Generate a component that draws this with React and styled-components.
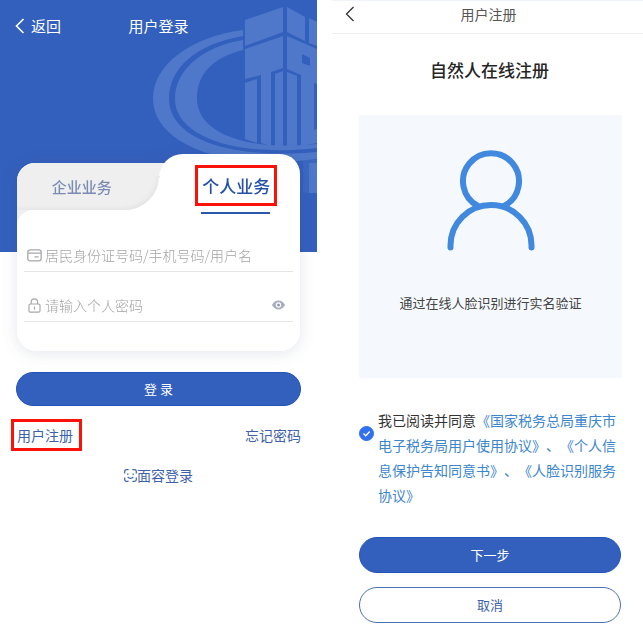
import React from "react";
import styled, { createGlobalStyle, css } from "styled-components";

const blue = "#3460bd";
const ink = "#3d62a8";
const red = "#fb1208";

const GlobalStyle = createGlobalStyle`
  *, *::before, *::after { box-sizing: border-box; }
  body {
    margin: 0;
    background: #fff;
    font-family: "Noto Sans CJK SC", "Noto Sans", sans-serif;
    font-size: 14px;
    line-height: 20px;
    text-spacing-trim: space-all;
  }
  button, input { font: inherit; }
  button { border: 0; background: none; padding: 0; cursor: pointer; }
  a { text-decoration: none; color: inherit; }
  svg { display: block; flex: none; }
`;

const Page = styled.main`
  display: grid;
  grid-template-columns: 317fr 311fr;
  column-gap: 15px;
  align-items: start;
`;

const Screen = styled.section`
  min-width: 0;
`;

const Hero = styled.div`
  position: relative;
  height: 252px;
  background: ${blue};
  overflow: hidden;
`;

const Watermark = styled.svg`
  position: absolute;
  top: 0;
  right: 0;
  fill: #4f78ca;
`;

const HeroBar = styled.header`
  position: relative;
  display: grid;
  grid-template-columns: 1fr auto 1fr;
  align-items: center;
  height: 52px;
  padding: 0 15px;
  color: #fff;
`;

const BackButton = styled.button`
  display: flex;
  align-items: center;
  gap: 6px;
  color: ${(p) => p.$color};
  font-size: 15px;
`;

const ScreenTitle = styled.h1`
  margin: 0;
  font-size: ${(p) => p.$size};
  font-weight: 400;
`;

const LoginBody = styled.form`
  position: relative;
  margin-top: -98px;
  padding: 0 16px;
`;

const Card = styled.div`
  margin: 0 1px;
  filter: drop-shadow(0 2px 8px rgba(30, 50, 90, 0.12));
`;

const Tabs = styled.div`
  display: grid;
  grid-template-columns: 1fr 1fr;
  align-items: end;
`;

const InactiveCell = styled.div`
  position: relative;
  height: 47px;
  background: #fff;
  border-radius: 18px 0 0 0;

  &::after {
    content: "";
    position: absolute;
    top: 0;
    right: -12px;
    width: 24px;
    height: 13px;
    background: #efefef;
  }
`;

const InactiveTab = styled.button`
  width: 100%;
  height: 47px;
  padding-right: 12px;
  background: #efefef;
  border-radius: 18px 0 34px 0;
  box-shadow: inset -3px -4px 6px -4px rgba(0, 0, 0, 0.07);
  color: #7b8cb4;
  font-size: 15px;
  font-weight: 500;
`;

const ActiveTab = styled.button`
  position: relative;
  z-index: 1;
  display: flex;
  justify-content: center;
  height: 56px;
  padding: 11px 0 0 14px;
  background: #fff;
  border-radius: 24px 20px 0 0;
  color: #2450a8;
  font-size: 17px;
  font-weight: 500;
`;

const TabLabel = styled.span`
  position: relative;
  height: 41px;
  padding: 8px 4px;
  border: 3px solid ${red};

  &::after {
    content: "";
    position: absolute;
    left: 3px;
    right: 4px;
    bottom: -11px;
    height: 2px;
    background: #2b56ad;
  }
`;

const FieldsBacking = styled.div`
  background: linear-gradient(#efefef 16px, #fff 16px);
  border-radius: 0 0 20px 20px;
`;

const Fields = styled.div`
  display: grid;
  gap: 10px;
  padding: 22px 7px 29px;
  background: #fff;
  border-radius: 16px 0 20px 20px;
`;

const Field = styled.label`
  display: flex;
  align-items: center;
  gap: 3px;
  height: 40px;
  padding: 8px 8px 1px 3px;
  border-bottom: 1px solid #e4e4e4;
  color: #a8a8ac;
`;

const FieldInput = styled.input`
  flex: 1;
  min-width: 0;
  padding: 0;
  border: 0;
  outline: 0;
  background: none;
  color: #444;
  font-size: 14px;
  font-weight: 300;

  &::placeholder { color: #a4a4a4; opacity: 1; }
`;

const pill = css`
  display: block;
  width: 100%;
  border-radius: 18px;
  font-size: 13px;
`;

const PrimaryButton = styled.button`
  ${pill}
  height: ${(p) => p.$height};
  background: ${blue};
  border: 1px solid #2554b8;
  color: #fff;
`;

const OutlineButton = styled.button`
  ${pill}
  height: 36px;
  background: #fff;
  border: 1px solid #4a6fb5;
  color: ${ink};
`;

const LoginAction = styled.div`
  margin-top: 21px;
`;

const LinkRow = styled.nav`
  display: flex;
  justify-content: space-between;
  align-items: center;
  margin: 13px 0 0 -5px;
  color: ${ink};
`;

const RegisterLink = styled.a`
  padding: 3px 6px 3px 3px;
  border: 3px solid ${red};
`;

const FaceLogin = styled.button`
  display: flex;
  align-items: center;
  margin: 14px auto 0;
  color: ${ink};
`;

const RegisterBar = styled.header`
  display: grid;
  grid-template-columns: 1fr auto 1fr;
  align-items: center;
  height: 34px;
  padding: 0 11px 7px 13px;
  border-top: 1px solid #f0f3fc;
  border-bottom: 1px solid #efeff1;
  color: #555;
`;

const RegisterBody = styled.form`
  padding: 0 21px 0 27px;
`;

const Heading = styled.h2`
  margin: 0;
  padding: 24px 2px 33px 0;
  color: #252525;
  font-size: 17px;
  line-height: 24px;
  font-weight: 500;
  text-align: center;
`;

const VerifyPanel = styled.div`
  display: flex;
  flex-direction: column;
  align-items: center;
  gap: 42px;
  height: 263px;
  padding-top: 34px;
  background: #f5f9fd;
  color: #444;
  font-size: 13px;
`;

const Agreement = styled.div`
  display: grid;
  grid-template-columns: 15px 1fr;
  column-gap: 4px;
  padding: 30px 0 29px;
  line-height: 25px;
`;

const Consent = styled.input`
  appearance: none;
  width: 15px;
  height: 15px;
  margin: 18px 0 0;
  border-radius: 50%;
  border: 1px solid #3170ee;
  background: #fff;

  &:checked {
    background: #3170ee url("data:image/svg+xml,%3Csvg xmlns='http://www.w3.org/2000/svg' viewBox='0 0 13 13'%3E%3Cpath d='M3.5 6.5l2.2 2.2 4-4.2' fill='none' stroke='white' stroke-width='1.4'/%3E%3C/svg%3E") center / 13px no-repeat;
  }
`;

const Terms = styled.p`
  margin: 0;
  color: #3c86cb;
`;

const TermsLabel = styled.label`
  color: #333;
`;

const Actions = styled.div`
  display: grid;
  gap: 14px;
  padding-right: 1px;
`;

const Chevron = ({ thin }) => (
  <svg width="10" height="16" viewBox="0 0 10 16" fill="none" stroke="currentColor" strokeWidth={thin ? 1.3 : 1.6}>
    <path d="M8.5 1 1.5 8l7 7" />
  </svg>
);

const CardIcon = () => (
  <svg width="15" height="13" viewBox="0 0 15 13" fill="none" stroke="currentColor" strokeWidth="1.3">
    <rect x="0.8" y="0.8" width="13.4" height="11" rx="2.4" />
    <path d="M1 4.2h13M7.5 7.8h4" />
  </svg>
);

const LockIcon = () => (
  <svg width="15" height="15" viewBox="0 0 15 15" fill="none" stroke="currentColor" strokeWidth="1.2">
    <rect x="2" y="6" width="11" height="8.2" rx="1.5" />
    <path d="M4.2 6V4a3.2 3.2 0 0 1 6.4 0v2M7.5 8.4v3.4" />
  </svg>
);

const EyeIcon = () => (
  <svg width="13" height="10" viewBox="0 0 13 10">
    <path d="M0 5C3-.9 10-.9 13 5 10 10.9 3 10.9 0 5Z" fill="#a9adbd" />
    <circle cx="6.5" cy="5" r="2.7" fill="#fff" />
    <circle cx="6.5" cy="5" r="1.5" fill="#969bae" />
  </svg>
);

const FaceIcon = () => (
  <svg width="13" height="13" viewBox="0 0 13 13" fill="none" stroke="currentColor" strokeWidth="1.2">
    <path d="M.7 4.6V2.5Q.7.7 2.5.7H4.6M8.4.7h2.1q1.8 0 1.8 1.800V4.600M12.300 8.400v2.100q0 1.800-1.800 1.800H8.400M4.600 12.300H2.500Q.7 12.300.7 10.500V8.400" />
    <path d="M3.800 4.500v1.500M9.200 4.500v1.500M3.600 7.800q2.900 3.200 5.800 0" />
  </svg>
);

const PersonIcon = () => (
  <svg width="88" height="102" viewBox="0 0 88 102" fill="none" stroke="#4089de" strokeWidth="6" strokeLinecap="round">
    <path d="M31 57A28 28 0 1 1 57 57" />
    <path d="M3.5 98.500v-2a40.500 40.500 0 0 1 81 0v2" />
  </svg>
);

const TaxEmblem = () => (
  <Watermark width="317" height="252" viewBox="0 0 317 252" aria-hidden="true">
    <path d="M243 30C190 37 153 65 153 99C153 140 215 172 317 159V152C225 160 169 137 169 99C169 68 196 44 243 36Z" />
    <path d="M243 40C202 47 175 70 175 99C175 134 230 158 317 148V144C240 152 197 130 197 99C197 74 212 58 243 50Z" />
    <path d="M245 20 283 7V32L245 46Z" />
    <path d="M287 7 305 17V41L287 32Z" />
    <path d="M309 18 317 22V46L309 43Z" />
    <path d="M245 49 283 36V68L271 72V146L261 143V75L245 79Z" />
    <path d="M245 83 257 79V143L245 139Z" />
    <path d="M275 74 283 71V149L275 147Z" />
    <path d="M287 36 317 49V84L314 83V130L317 129V143L301 146V75L287 69ZM302 54V63L310 66V58Z" fillRule="evenodd" />
    <path d="M287 72 297 76V147L287 149Z" />
    <path d="M303 160H317V163H309V193H303Z" opacity="0.3" />
    <path d="M309 163H317V193H309Z" />
  </Watermark>
);

export default function App() {
  return (
    <>
      <GlobalStyle />
      <Page>
        <Screen>
          <Hero>
            <TaxEmblem />
            <HeroBar>
              <BackButton type="button" $color="#fff">
                <Chevron />
                返回
              </BackButton>
              <ScreenTitle $size="15px">用户登录</ScreenTitle>
            </HeroBar>
          </Hero>
          <LoginBody onSubmit={(e) => e.preventDefault()}>
            <Card>
              <Tabs role="tablist">
                <InactiveCell role="presentation">
                  <InactiveTab type="button" role="tab" aria-selected="false">企业业务</InactiveTab>
                </InactiveCell>
                <ActiveTab type="button" role="tab" aria-selected="true">
                  <TabLabel>个人业务</TabLabel>
                </ActiveTab>
              </Tabs>
              <FieldsBacking>
                <Fields>
                  <Field>
                    <CardIcon />
                    <FieldInput aria-label="用户名" placeholder="居民身份证号码/手机号码/用户名" />
                  </Field>
                  <Field>
                    <LockIcon />
                    <FieldInput type="password" aria-label="密码" placeholder="请输入个人密码" />
                    <button type="button" aria-label="显示密码">
                      <EyeIcon />
                    </button>
                  </Field>
                </Fields>
              </FieldsBacking>
            </Card>
            <LoginAction>
              <PrimaryButton $height="34px">登 录</PrimaryButton>
            </LoginAction>
            <LinkRow>
              <RegisterLink href="#register">用户注册</RegisterLink>
              <a href="#forgot">忘记密码</a>
            </LinkRow>
            <FaceLogin type="button">
              <FaceIcon />
              面容登录
            </FaceLogin>
          </LoginBody>
        </Screen>
        <Screen>
          <RegisterBar>
            <BackButton type="button" aria-label="返回" $color="#333">
              <Chevron thin />
            </BackButton>
            <ScreenTitle $size="14px">用户注册</ScreenTitle>
          </RegisterBar>
          <RegisterBody onSubmit={(e) => e.preventDefault()}>
            <Heading>自然人在线注册</Heading>
            <VerifyPanel>
              <PersonIcon />
              <span>通过在线人脸识别进行实名验证</span>
            </VerifyPanel>
            <Agreement>
              <Consent id="consent" type="checkbox" defaultChecked />
              <Terms>
                <TermsLabel htmlFor="consent">我已阅读并同意</TermsLabel>
                <a href="#terms">《国家税务总局重庆市电子税务局用户使用协议》</a>、
                <a href="#privacy">《个人信息保护告知同意书》</a>、
                <a href="#face">《人脸识别服务协议》</a>
              </Terms>
            </Agreement>
            <Actions>
              <PrimaryButton $height="36px">下一步</PrimaryButton>
              <OutlineButton type="button">取消</OutlineButton>
            </Actions>
          </RegisterBody>
        </Screen>
      </Page>
    </>
  );
}
